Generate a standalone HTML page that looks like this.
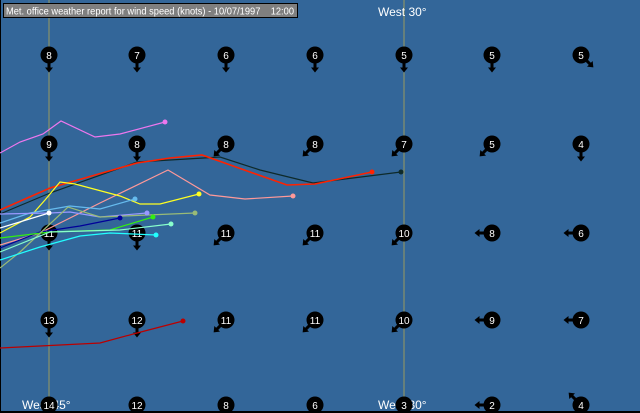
<!DOCTYPE html>
<html><head><meta charset="utf-8"><style>
html,body{margin:0;padding:0;background:#336699;}
svg{display:block}
text{font-family:"Liberation Sans",sans-serif;}
</style></head><body>
<svg width="640" height="413" viewBox="0 0 640 413" xmlns="http://www.w3.org/2000/svg">
<defs>
<g id="a"><rect x="-1.5" y="7" width="3" height="7" fill="#000"/><polygon points="-4,12.5 4,12.5 0,17.5" fill="#000"/></g>
</defs>
<rect width="640" height="413" fill="#336699"/>
<line x1="49" y1="0" x2="49" y2="413" stroke="#9a9a60" stroke-width="1"/>
<line x1="404" y1="0" x2="404" y2="413" stroke="#9a9a60" stroke-width="1"/>
<line x1="0.5" y1="0" x2="0.5" y2="413" stroke="#000"/>
<line x1="0" y1="412" x2="640" y2="412" stroke="#000" stroke-width="2"/>
<text x="378" y="16" fill="#fff" font-size="12">West 30°</text>
<text x="22" y="409" fill="#fff" font-size="12">West 45°</text>
<text x="378" y="409" fill="#fff" font-size="12">West 30°</text>
<g fill="#000">
<use href="#a" transform="translate(49,55)"/><use href="#a" transform="translate(137,55)"/><use href="#a" transform="translate(226,55)"/><use href="#a" transform="translate(315,55)"/><use href="#a" transform="translate(404,55)"/><use href="#a" transform="translate(492,55)"/><use href="#a" transform="translate(581,55) rotate(-45)"/>
<use href="#a" transform="translate(49,144)"/><use href="#a" transform="translate(137,144)"/><use href="#a" transform="translate(226,144) rotate(45)"/><use href="#a" transform="translate(315,144) rotate(45)"/><use href="#a" transform="translate(404,144) rotate(45)"/><use href="#a" transform="translate(492,144) rotate(45)"/><use href="#a" transform="translate(581,144)"/>
<use href="#a" transform="translate(49,233)"/><use href="#a" transform="translate(137,233)"/><use href="#a" transform="translate(226,233) rotate(45)"/><use href="#a" transform="translate(315,233) rotate(45)"/><use href="#a" transform="translate(404,233) rotate(45)"/><use href="#a" transform="translate(492,233) rotate(90)"/><use href="#a" transform="translate(581,233) rotate(90)"/>
<use href="#a" transform="translate(49,320)"/><use href="#a" transform="translate(137,320)"/><use href="#a" transform="translate(226,320) rotate(45)"/><use href="#a" transform="translate(315,320) rotate(45)"/><use href="#a" transform="translate(404,320) rotate(45)"/><use href="#a" transform="translate(492,320) rotate(90)"/><use href="#a" transform="translate(581,320) rotate(90)"/>
<use href="#a" transform="translate(492,405) rotate(90)"/><use href="#a" transform="translate(581,405) rotate(135)"/>
<circle cx="49" cy="55" r="8.5"/><circle cx="137" cy="55" r="8.5"/><circle cx="226" cy="55" r="8.5"/><circle cx="315" cy="55" r="8.5"/><circle cx="404" cy="55" r="8.5"/><circle cx="492" cy="55" r="8.5"/><circle cx="581" cy="55" r="8.5"/>
<circle cx="49" cy="144" r="8.5"/><circle cx="137" cy="144" r="8.5"/><circle cx="226" cy="144" r="8.5"/><circle cx="315" cy="144" r="8.5"/><circle cx="404" cy="144" r="8.5"/><circle cx="492" cy="144" r="8.5"/><circle cx="581" cy="144" r="8.5"/>
<circle cx="49" cy="233" r="8.5"/><circle cx="137" cy="233" r="8.5"/><circle cx="226" cy="233" r="8.5"/><circle cx="315" cy="233" r="8.5"/><circle cx="404" cy="233" r="8.5"/><circle cx="492" cy="233" r="8.5"/><circle cx="581" cy="233" r="8.5"/>
<circle cx="49" cy="320" r="8.5"/><circle cx="137" cy="320" r="8.5"/><circle cx="226" cy="320" r="8.5"/><circle cx="315" cy="320" r="8.5"/><circle cx="404" cy="320" r="8.5"/><circle cx="492" cy="320" r="8.5"/><circle cx="581" cy="320" r="8.5"/>
<circle cx="49" cy="405" r="8.5"/><circle cx="137" cy="405" r="8.5"/><circle cx="226" cy="405" r="8.5"/><circle cx="315" cy="405" r="8.5"/><circle cx="404" cy="405" r="8.5"/><circle cx="492" cy="405" r="8.5"/><circle cx="581" cy="405" r="8.5"/>
</g>
<g fill="#fff" font-size="10" text-anchor="middle">
<text x="49" y="59">8</text><text x="137" y="59">7</text><text x="226" y="59">6</text><text x="315" y="59">6</text><text x="404" y="59">5</text><text x="492" y="59">5</text><text x="581" y="59">5</text>
<text x="49" y="148">9</text><text x="137" y="148">8</text><text x="226" y="148">8</text><text x="315" y="148">8</text><text x="404" y="148">7</text><text x="492" y="148">5</text><text x="581" y="148">4</text>
<text x="49" y="237">11</text><text x="137" y="237">11</text><text x="226" y="237">11</text><text x="315" y="237">11</text><text x="404" y="237">10</text><text x="492" y="237">8</text><text x="581" y="237">6</text>
<text x="49" y="324">13</text><text x="137" y="324">12</text><text x="226" y="324">11</text><text x="315" y="324">11</text><text x="404" y="324">10</text><text x="492" y="324">9</text><text x="581" y="324">7</text>
<text x="49" y="409">14</text><text x="137" y="409">12</text><text x="226" y="409">8</text><text x="315" y="409">6</text><text x="404" y="409">3</text><text x="492" y="409">2</text><text x="581" y="409">4</text>
</g>
<g fill="none" stroke-width="1.2">
<polyline stroke="#ee77ee" points="0,153 20,142 43,134 61,121 95,137 120,134 165,122"/>
<polyline stroke="#0e2a2a" points="0,214 50,193 137,162 220,157 260,170 313,183 401,172"/>
<polyline stroke="#ff2200" stroke-width="1.6" points="0,210 50,188 137,163 170,158 202,155 250,172 287,185 315,184 372,172"/>
<polyline stroke="#ff9999" points="0,245 40,233 100,203 168,170 210,195 245,199 293,196"/>
<polyline stroke="#ffff22" points="0,233 30,217 45,200 60,182 75,184 120,196 140,204 160,204 199,194"/>
<polyline stroke="#66bbee" points="0,223 30,213 70,206 100,209 135,199"/>
<polyline stroke="#9999ff" points="0,214 50,213 70,212 100,217 147,213"/>
<polyline stroke="#ffffff" points="0,228 49,213"/>
<polyline stroke="#000099" points="0,248 40,232 80,226 120,218"/>
<polyline stroke="#33ee11" points="0,238 50,232 110,230 153,217"/>
<polyline stroke="#99bb77" points="0,268 20,252 68,207 100,217 195,213"/>
<polyline stroke="#88ffcc" points="0,252 50,232 120,230 171,224"/>
<polyline stroke="#22ffff" points="0,260 40,247 80,236 110,233 156,235"/>
<polyline stroke="#bb0000" points="0,348 60,345 100,343 137,333 183,321"/>
</g>
<g>
<circle cx="165" cy="122" r="2.5" fill="#ee77ee"/><circle cx="401" cy="172" r="2.5" fill="#0e2a2a"/><circle cx="372" cy="172" r="2.5" fill="#ff2200"/><circle cx="293" cy="196" r="2.5" fill="#ff9999"/><circle cx="199" cy="194" r="2.5" fill="#ffff22"/><circle cx="135" cy="199" r="2.5" fill="#66bbee"/><circle cx="147" cy="213" r="2.5" fill="#9999ff"/><circle cx="49" cy="213" r="2.5" fill="#fff"/><circle cx="120" cy="218" r="2.5" fill="#000099"/><circle cx="153" cy="217" r="2.5" fill="#33ee11"/><circle cx="195" cy="213" r="2.5" fill="#99bb77"/><circle cx="171" cy="224" r="2.5" fill="#88ffcc"/><circle cx="156" cy="235" r="2.5" fill="#22ffff"/><circle cx="183" cy="321" r="2.5" fill="#bb0000"/>
</g>
<rect x="3.5" y="3.5" width="294" height="14" fill="#7f7f7f" stroke="#000"/>
<text x="6" y="14.5" fill="#fff" font-size="10.5" textLength="288" lengthAdjust="spacingAndGlyphs" xml:space="preserve">Met. office weather report for wind speed (knots) - 10/07/1997    12:00</text>
</svg>
</body></html>
